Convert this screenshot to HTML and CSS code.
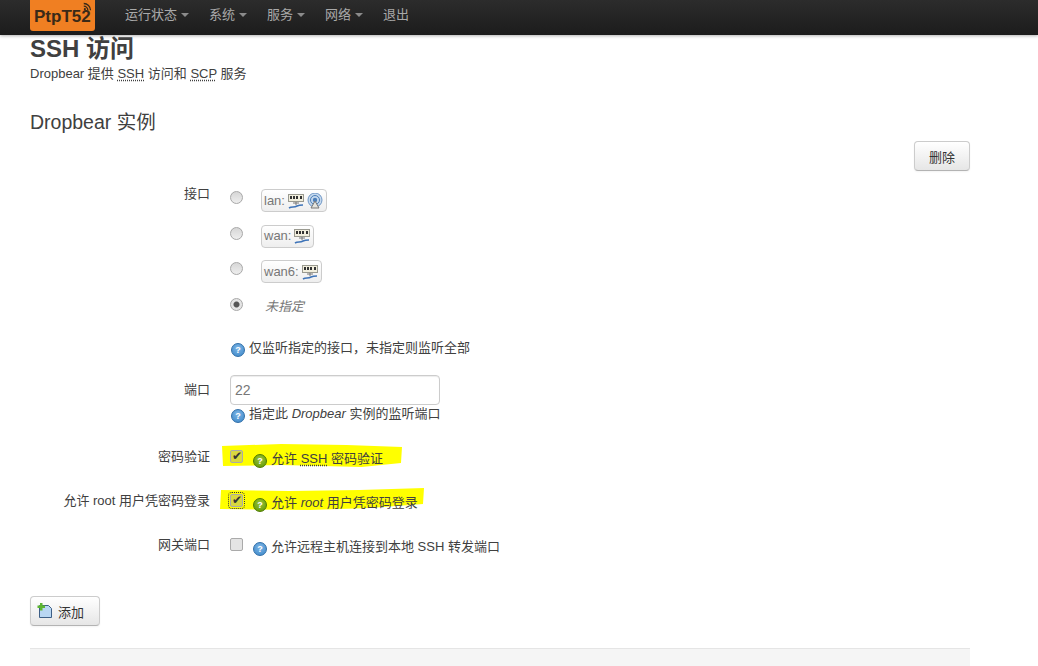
FILE: index.html
```html
<!DOCTYPE html>
<html lang="zh-cn">

<head>
  <meta charset="UTF-8" />
  <title>SSH 访问</title>
  <link rel="stylesheet" href="styles.css">
</head>

<body>

  <svg class="sprites" width="0" height="0">
    <defs>
      <symbol id="eth" viewBox="0 0 16 16">
        <rect x="0.5" y="1.5" width="15" height="7" fill="#f1eedd" stroke="#9a9a90" />
        <path d="M2 3h2v3H2zM5 3h2v3H5zM8 3h2v3H8zM12 3h2v3h-2z" fill="#333" />
        <path d="M8 9v3M5 10h6" stroke="#777" fill="none" />
        <path d="M1 15c3-2 5 0 8-2 2-1 4-1 6-1" stroke="#3f74b8" stroke-width="1.6" fill="none" />
      </symbol>
      <symbol id="wifi" viewBox="0 0 16 16">
        <circle cx="8" cy="7" r="7" fill="#c5d9ee" stroke="#6f97c6" />
        <circle cx="8" cy="7" r="4.5" fill="none" stroke="#4c7fb9" />
        <circle cx="8" cy="7" r="2.2" fill="#4c7fb9" />
        <path d="M8 8l-4 7h8z" fill="#e4e4de" stroke="#777" />
      </symbol>
    </defs>
  </svg>

  <header class="navbar">
    <a class="brand">
      <span class="brand-text">PtpT52</span>
      <svg class="brand-wifi" viewBox="0 0 12 12" width="9" height="9">
        <circle cx="2.5" cy="9.5" r="1.4" fill="#3a2a18" />
        <path d="M1 5.5a5.5 5.5 0 0 1 5.5 5.500M1 2a9 9 0 0 1 9 9" stroke="#3a2a18" stroke-width="1.700" fill="none" />
      </svg>
    </a>
    <nav class="nav">
      <a class="nav-item">运行状态<i class="caret"></i></a>
      <a class="nav-item">系统<i class="caret"></i></a>
      <a class="nav-item">服务<i class="caret"></i></a>
      <a class="nav-item">网络<i class="caret"></i></a>
      <a class="nav-item">退出</a>
    </nav>
  </header>

  <main class="container">
    <h1>SSH 访问</h1>
    <p class="desc">Dropbear 提供 <abbr>SSH</abbr> 访问和 <abbr>SCP</abbr> 服务</p>

    <h2>Dropbear 实例</h2>

    <div class="remove-bar">
      <button class="btn btn-remove">删除</button>
    </div>

    <!-- 接口 -->
    <div class="field field-iface">
      <label class="field-label">接口</label>
      <div class="field-value">
        <div class="iface-row">
          <span class="radio"></span>
          <span class="iface-badge">lan:
            <svg class="iface-icon"><use href="#eth" /></svg>
            <svg class="iface-icon"><use href="#wifi" /></svg>
          </span>
        </div>
        <div class="iface-row">
          <span class="radio"></span>
          <span class="iface-badge">wan:
            <svg class="iface-icon"><use href="#eth" /></svg>
          </span>
        </div>
        <div class="iface-row">
          <span class="radio"></span>
          <span class="iface-badge">wan6:
            <svg class="iface-icon"><use href="#eth" /></svg>
          </span>
        </div>
        <div class="iface-row">
          <span class="radio checked"></span>
          <em class="iface-none">未指定</em>
        </div>
        <p class="help help-iface"><span class="hint">?</span>仅监听指定的接口，未指定则监听全部</p>
      </div>
    </div>

    <!-- 端口 -->
    <div class="field field-port">
      <label class="field-label">端口</label>
      <div class="field-value">
        <input class="text-input" type="text" value="22" readonly>
        <p class="help"><span class="hint">?</span>指定此 <em>Dropbear</em> 实例的监听端口</p>
      </div>
    </div>

    <!-- 复选项 -->
    <div class="field field-check">
      <label class="field-label">密码验证</label>
      <div class="field-value check-row">
        <svg class="marker marker-one" viewBox="0 0 180 24" preserveAspectRatio="none">
          <path d="M1 3 L60 1 L125 2 L180 4 L179 20 L140 24 L60 22 L2 23 Z" fill="#ffff00" />
        </svg>
        <span class="checkbox checked">&#10004;</span>
        <span class="help help-check"><span class="hint hint-green">?</span>允许 <abbr>SSH</abbr> 密码验证</span>
      </div>
    </div>

    <div class="field field-check">
      <label class="field-label">允许 root 用户凭密码登录</label>
      <div class="field-value check-row">
        <svg class="marker marker-two" viewBox="0 0 204 24" preserveAspectRatio="none">
          <path d="M2 2 L70 3 L140 2 L204 0 L203 16 L150 20 L90 22 L1 21 Z" fill="#ffff00" />
        </svg>
        <span class="checkbox checked focused">&#10004;</span>
        <span class="help help-check"><span class="hint hint-green">?</span>允许 <em>root</em> 用户凭密码登录</span>
      </div>
    </div>

    <div class="field field-check">
      <label class="field-label">网关端口</label>
      <div class="field-value check-row">
        <span class="checkbox"></span>
        <span class="help help-check"><span class="hint">?</span>允许远程主机连接到本地 SSH 转发端口</span>
      </div>
    </div>

    <button class="btn btn-add">
      <svg class="add-icon" viewBox="0 0 16 16" width="16" height="16">
        <path d="M2.500 2.500h9l3 3v9h-12z" fill="#b9d7f3" stroke="#3d5f86" />
        <path d="M3 0h2.500v2.500H8V5H5.500v2.500H3V5H0.500V2.500H3z" fill="#5cb531" />
      </svg>
      添加
    </button>

    <div class="footer-band"></div>
  </main>

</body>

</html>
```

FILE: styles.css
```css
body {
  margin: 0;
  height: 666px;
  overflow: hidden;
  background: #fff;
  color: #404040;
  font-family: "Liberation Sans", "Noto Sans CJK SC", sans-serif;
  font-size: 13px;
  line-height: 18px;
}

.sprites {
  position: absolute;
}

.navbar {
  display: flex;
  align-items: flex-start;
  height: 35px;
  padding-left: 30px;
  background: linear-gradient(to bottom, #2c2c2c, #1c1c1c);
  box-shadow: 0 1px 3px rgba(0, 0, 0, 0.3);
}

.brand {
  position: relative;
  display: block;
  width: 65px;
  height: 31px;
  box-sizing: border-box;
  padding: 6px 0 0 4px;
  background: #f07f22;
  border-radius: 0 0 3px 3px;
}

.brand-text {
  font-family: "Liberation Sans", sans-serif;
  font-size: 17px;
  line-height: 22px;
  font-weight: bold;
  color: #3a2a18;
}

.brand-wifi {
  position: absolute;
  top: 2px;
  right: 3px;
}

.nav {
  display: flex;
  margin-left: 30px;
  gap: 20px;
}

.nav-item {
  display: flex;
  align-items: center;
  height: 29px;
  color: #a9a9a9;
  font-size: 13px;
}

.caret {
  width: 0;
  height: 0;
  margin-left: 4px;
  margin-top: 1px;
  border-left: 4px solid transparent;
  border-right: 4px solid transparent;
  border-top: 4px solid #8b8b8b;
}

.container {
  width: 940px;
  margin-left: 30px;
}

h1 {
  margin: 0;
  font-size: 24px;
  line-height: 27px;
  font-weight: bold;
  color: #404040;
}

.desc {
  margin: 0;
  padding-top: 3px;
  color: #404040;
}

abbr {
  text-decoration: underline dotted #404040;
  text-underline-offset: 2px;
}

h2 {
  margin: 27px 0 0;
  font-size: 19.5px;
  line-height: 24px;
  font-weight: normal;
  color: #404040;
}

.remove-bar {
  display: flex;
  justify-content: flex-end;
  margin-top: 7px;
}

.btn {
  display: inline-flex;
  align-items: center;
  justify-content: center;
  height: 30px;
  box-sizing: border-box;
  background: linear-gradient(to bottom, #fff, #e6e6e6);
  border: 1px solid #ccc;
  border-bottom-color: #b3b3b3;
  border-radius: 4px;
  box-shadow: 0 1px 2px rgba(0, 0, 0, 0.05);
  color: #333;
  font-family: inherit;
  font-size: 13px;
}

.btn-remove {
  width: 56px;
}

.field {
  display: grid;
  grid-template-columns: 180px 1fr;
  column-gap: 20px;
}

.field-label {
  text-align: right;
  color: #404040;
}

.field-iface {
  margin-top: 18px;
}

.field-iface .field-label {
  margin-top: -4px;
}

.iface-row {
  display: flex;
  align-items: flex-start;
  height: 35.500px;
}

.radio {
  width: 13px;
  height: 13px;
  margin-top: 2px;
  box-sizing: border-box;
  border: 1px solid #a8a8a8;
  border-radius: 50%;
  background: linear-gradient(to bottom, #d6d6d6, #eee);
}

.radio.checked {
  background: radial-gradient(circle, #555 0 2.500px, #e4e4e4 3.500px);
}

.iface-badge {
  display: inline-flex;
  align-items: center;
  gap: 3px;
  height: 23px;
  margin-left: 18px;
  padding: 0 3px 0 2px;
  box-sizing: border-box;
  border: 1px solid #ccc;
  border-radius: 4px;
  background: linear-gradient(to bottom, #fff, #eee);
  color: #777;
  font-size: 13px;
}

.iface-icon {
  width: 16px;
  height: 16px;
}

.iface-none {
  margin-left: 22px;
  color: #777;
  font-size: 13px;
  line-height: 22px;
}

.help {
  margin: 0;
  color: #404040;
}

.help-iface {
  padding-top: 8px;
}

.help-check {
  padding-top: 2px;
}

.hint {
  display: inline-block;
  width: 14px;
  height: 14px;
  margin: 0 4px 0 1px;
  border-radius: 50%;
  border: 1px solid #2f6ea8;
  box-sizing: border-box;
  background: radial-gradient(circle at 50% 35%, #7fb6e6, #3a86c8);
  color: #fff;
  font-size: 9px;
  line-height: 12px;
  font-weight: bold;
  text-align: center;
  vertical-align: -1px;
}

.help-check .hint {
  margin: 0 4px 0 0;
}

.hint-green {
  border-color: #4d7a00;
  background: radial-gradient(circle at 50% 35%, #9cc43a, #5c9500);
}

.field-port {
  margin-top: 18px;
}

.field-port .field-label {
  padding-top: 6px;
}

.text-input {
  display: block;
  width: 210px;
  height: 30px;
  box-sizing: border-box;
  padding: 4px;
  border: 1px solid #ccc;
  border-radius: 4px;
  box-shadow: inset 0 1px 1px rgba(0, 0, 0, 0.075);
  color: #777;
  font-family: inherit;
  font-size: 14px;
}

.field-check {
  margin-top: 25px;
}

.field-check + .field-check {
  margin-top: 24px;
}

.check-row {
  position: relative;
  display: flex;
  align-items: flex-start;
}

.marker {
  position: absolute;
  z-index: -1;
}

.marker-one {
  left: -9px;
  top: -5px;
  width: 181px;
  height: 24px;
}

.marker-two {
  left: -11px;
  top: -4px;
  width: 205px;
  height: 24px;
}

.checkbox {
  width: 13px;
  height: 13px;
  box-sizing: border-box;
  border: 1px solid #aaa;
  border-radius: 2px;
  background: #e4e4e4;
  color: #333;
  font-size: 12px;
  line-height: 11px;
  text-align: center;
  margin-top: 2px;
  margin-right: 10px;
}

.checkbox.checked {
  background: #d8d840;
}

.checkbox.focused {
  outline: 1px dotted #333;
  outline-offset: 1px;
}

.btn-add {
  display: flex;
  justify-content: flex-start;
  width: 70px;
  margin-top: 40px;
  padding-left: 6px;
  gap: 5px;
}

.add-icon {
  flex-shrink: 0;
}

.footer-band {
  height: 40px;
  margin-top: 22px;
  background: #f5f5f5;
  border-top: 1px solid #e5e5e5;
}
```
